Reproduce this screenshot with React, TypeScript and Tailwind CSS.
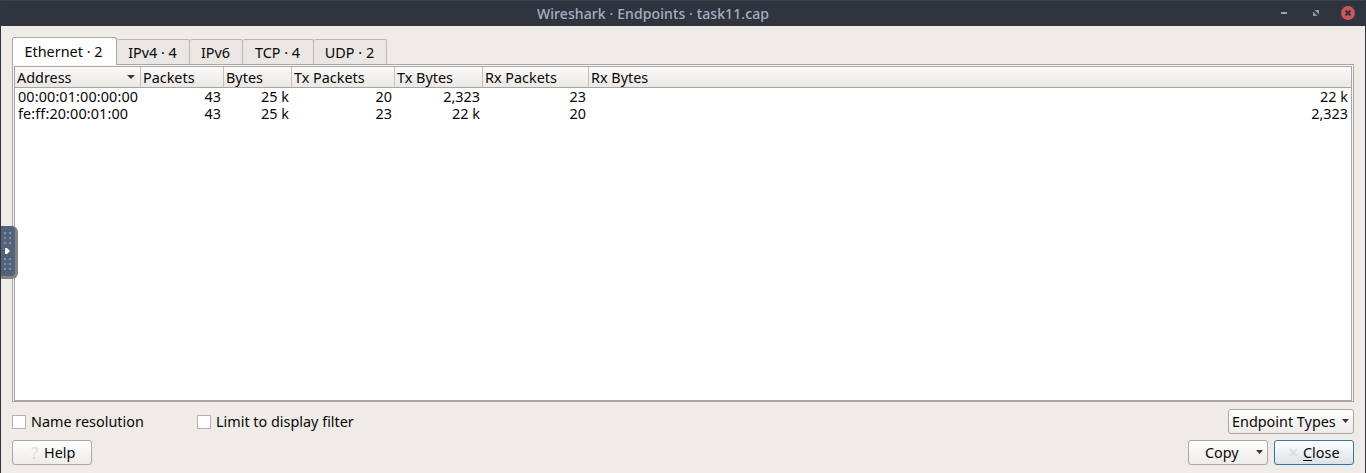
import React from "react";

type Column = { label: string; width: string; sorted?: boolean };

const columns: Column[] = [
  { label: "Address", width: "w-[126px]", sorted: true },
  { label: "Packets", width: "w-[83px]" },
  { label: "Bytes", width: "w-[68px]" },
  { label: "Tx Packets", width: "w-[103px]" },
  { label: "Tx Bytes", width: "w-[88px]" },
  { label: "Rx Packets", width: "w-[106px]" },
  { label: "Rx Bytes", width: "flex-1" },
];

const rows: string[][] = [
  ["00:00:01:00:00:00", "43", "25 k", "20", "2,323", "23", "22 k"],
  ["fe:ff:20:00:01:00", "43", "25 k", "23", "22 k", "20", "2,323"],
];

const tabs = [
  { label: "IPv4 · 4", width: "w-[73px]" },
  { label: "IPv6", width: "w-[53px]" },
  { label: "TCP · 4", width: "w-[71px]" },
  { label: "UDP · 2", width: "w-[73px]" },
];

function Caret({ className = "" }: { className?: string }) {
  return (
    <svg className={`shrink-0 ${className}`} viewBox="0 0 8 4" preserveAspectRatio="none" fill="#3a3a3a">
      <path d="M0 0h8L4 4z" />
    </svg>
  );
}

function TitleBar() {
  return (
    <header className="relative flex h-[26px] shrink-0 items-center justify-center border-t border-[#3c4254] bg-[#2f343f] text-[#a6b0c2]">
      <span className="mr-[60px] pt-px text-[14px] font-medium leading-5 tracking-[0.1px]">
        Wireshark · Endpoints · task11.cap
      </span>
      <div className="absolute right-[10px] top-[5px] flex items-center">
        <svg className="h-[14px] w-[78px]" viewBox="0 0 78 14">
          <path d="M4 6h6v2H4z" fill="#a2a5ad" />
          <path d="M37.5 4H42v4.5zM36 5.5v4.5h4.5z" fill="#9699a2" />
          <circle cx="71" cy="7" r="7" fill="#cc575d" />
          <path d="M68.5 4.5l5 5m0-5l-5 5" stroke="#2f343f" strokeWidth="1.9" />
        </svg>
      </div>
    </header>
  );
}

function TabBar() {
  return (
    <div className="relative z-10 -mb-px flex h-[28px] items-end">
      <div className="flex h-[28px] w-[105px] justify-center rounded-t-[3px] border border-b-0 border-[#aaa7a3] bg-white pr-[2px] pt-[4px]">
        <span className="whitespace-nowrap leading-5">Ethernet · 2</span>
      </div>
      {tabs.map((t) => (
        <div
          key={t.label}
          className={`mb-px flex h-[25px] justify-center rounded-t-[2px] border border-b-0 border-l-0 border-[#bbb8b4] bg-[#e9e6e3] pr-px pt-[3px] ${t.width}`}
        >
          <span className="whitespace-nowrap leading-5">{t.label}</span>
        </div>
      ))}
    </div>
  );
}

function EndpointTable() {
  return (
    <div className="h-[338px] border border-[#aaa7a3] bg-[#f7f6f5] p-px pb-0">
      <div className="flex h-full flex-col border border-[#aaa7a3] bg-white">
        <div className="flex h-[21px] shrink-0 border-b border-[#aaa7a3] bg-linear-to-b from-[#fbfaf9] to-[#eae7e4]">
          {columns.map((c) => (
            <div
              key={c.label}
              className={`flex shrink-0 items-center justify-between border-r border-[#c6c3bf] pl-[2px] pr-[5px] last:border-r-0 ${c.width}`}
            >
              <span className="whitespace-nowrap pt-px leading-5">{c.label}</span>
              {c.sorted && <Caret className="h-[4px] w-[8px]" />}
            </div>
          ))}
        </div>
        <div>
          {rows.map((r) => (
            <div key={r[0]} className="flex h-[17px] items-center">
              {r.map((v, i) => (
                <span
                  key={i}
                  className={`shrink-0 whitespace-nowrap leading-[17px] ${i === 0 ? "pl-[3px] tracking-[0.12px]" : "pr-[3px] text-right"} ${columns[i].width}`}
                >
                  {v}
                </span>
              ))}
            </div>
          ))}
        </div>
      </div>
    </div>
  );
}

function Check({ label, className = "" }: { label: string; className?: string }) {
  return (
    <label className={`flex items-center gap-[5px] ${className}`}>
      <span className="h-[14px] w-[14px] border border-[#b5b2ae] bg-white" />
      <span className="whitespace-nowrap leading-5">{label}</span>
    </label>
  );
}

const button =
  "flex h-[25px] items-center rounded-[3px] border border-[#aaa7a3] bg-linear-to-b from-white to-[#eeebe9]";

function PanelHandle() {
  return (
    <div className="absolute -left-px top-[226px] h-[53px] w-[18px] rounded-r-[6px] bg-[#858483]">
      <svg className="h-[50px] w-[15px]" viewBox="0 0 15 50">
        <path d="M0 0h11q4 0 4 4v42q0 4-4 4H0z" fill="#53637a" />
        <g fill="#8390a3">
          {[6, 11, 16, 32, 37, 42].map((y) => (
            <React.Fragment key={y}>
              <rect x="4" y={y} width="2" height="2" />
              <rect x="9" y={y} width="2" height="2" />
            </React.Fragment>
          ))}
        </g>
        <path d="M5 22h2l3 3-3 3H5z" fill="#fff" />
      </svg>
    </div>
  );
}

export default function App() {
  return (
    <div className="relative flex h-[473px] w-[1366px] flex-col overflow-hidden border-x border-[#2f343f] bg-[#efebe7] font-['Noto_Sans',sans-serif] text-[14.4px] text-[#080808]">
      <TitleBar />
      <main className="flex flex-col pl-[11px] pr-[11px] pt-[11px]">
        <TabBar />
        <EndpointTable />
        <div className="mt-[7px] flex h-[25px] items-center">
          <Check label="Name resolution" className="w-[185px]" />
          <Check label="Limit to display filter" />
          <button className={`${button} ml-auto w-[126px] justify-between pl-[3px] pr-[4px]`}>
            <span className="whitespace-nowrap leading-5">Endpoint Types</span>
            <Caret className="mb-[2px] h-[4px] w-[7px]" />
          </button>
        </div>
        <div className="mt-[6px] flex h-[25px] items-center">
          <button className={`${button} w-[80px] pl-[18px]`}>
            <span className="w-[13px] text-left text-[17px] leading-5 text-[#dcdad8]">?</span>
            <span className="leading-5">Help</span>
          </button>
          <button className={`${button} ml-auto w-[80px] justify-between pl-[16px] pr-[4px]`}>
            <span className="leading-5">Copy</span>
            <Caret className="mb-[2px] h-[4px] w-[7px]" />
          </button>
          <button className="ml-[6px] flex h-[25px] w-[80px] items-center rounded-[3px] border border-[#2c77a5] bg-linear-to-b from-white to-[#dce2e6] pl-[14px]">
            <svg className="mr-[5px] h-[9px] w-[9px]" viewBox="0 0 9 9">
              <path d="M1 1l7 7m0-7l-7 7" stroke="#dcdddd" strokeWidth="2" />
            </svg>
            <span className="leading-5">
              <span className="underline decoration-1 underline-offset-2">C</span>lose
            </span>
          </button>
        </div>
      </main>
      <PanelHandle />
    </div>
  );
}
